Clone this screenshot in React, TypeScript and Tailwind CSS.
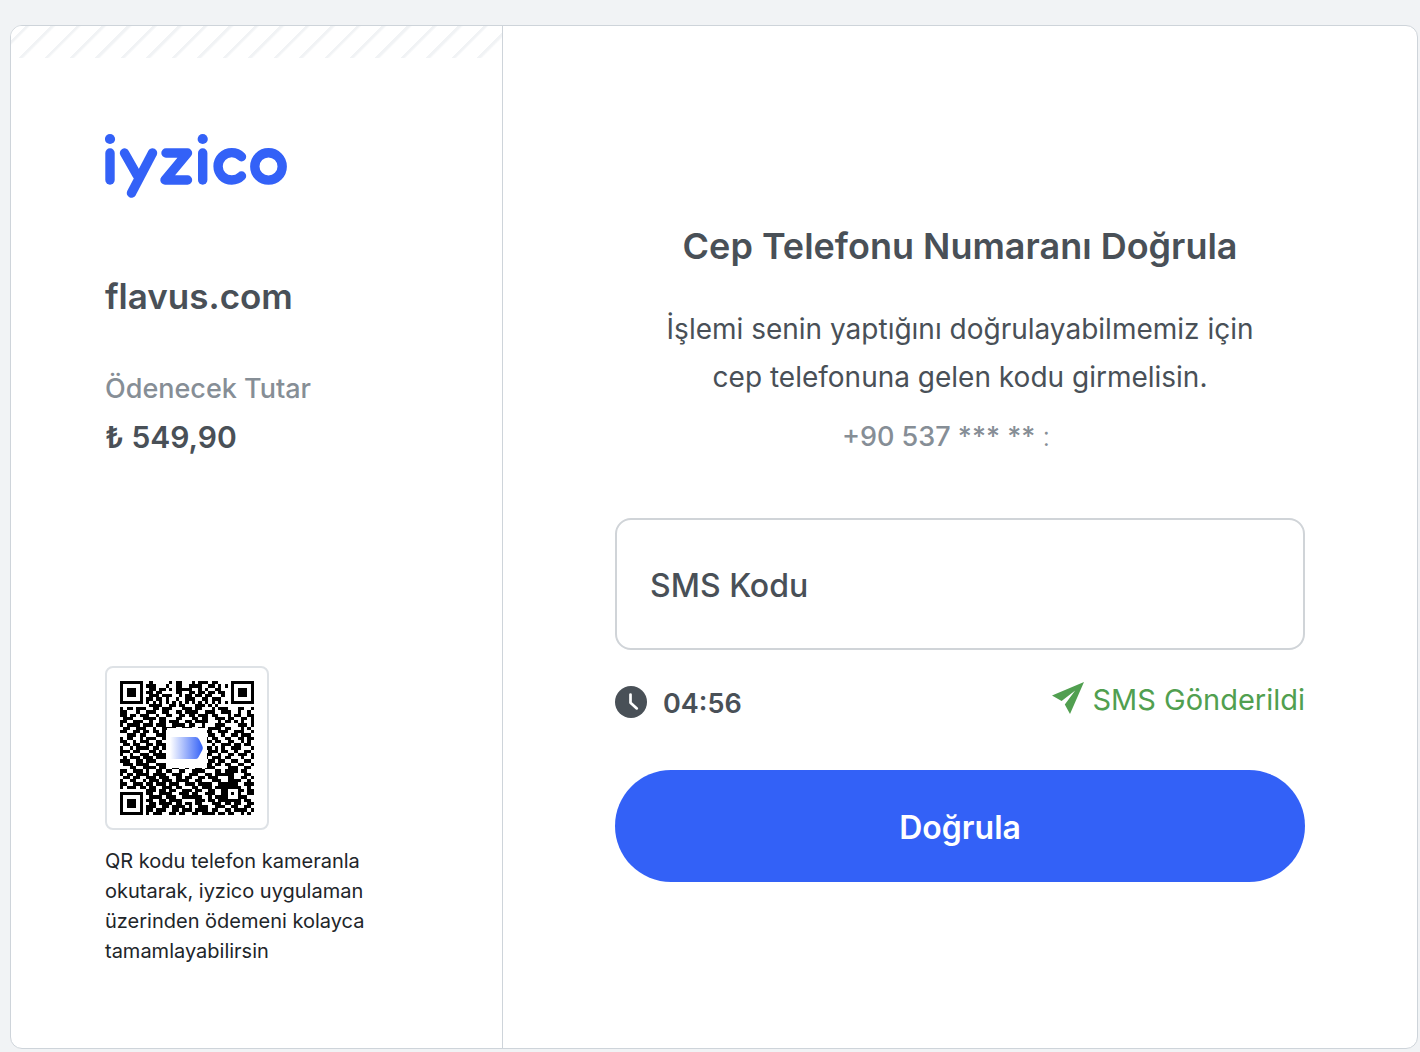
import { useState } from 'react';

const BLUE = '#3361f7';

const qrRows = [
  '11111110010000010110001011101100001111111',
  '10000010111000100110011110011010101000001',
  '10111010011011010111110010100110001011101',
  '10111010110110000110011011011011001011101',
  '10111010011101110010110110110001001011101',
  '10000010110110100100111001101110001000001',
  '11111110101010101010101010101010101111111',
  '00000000011110011011000111010100000000000',
  '10110111001101110001110110001011100011001',
  '11000100111001100110111100111001110010010',
  '11011011100100110011011011101100010110011',
  '01110001111011000110001101100111011001101',
  '11001110010011011100110111100010110101001',
  '10111101110111001111011001000111000011101',
  '01100111001001111001110011011110110001010',
  '11001101101101000000000000110011100111001',
  '00111011000111000000000000011001001101110',
  '10110010111001000000000000101100110011011',
  '11001011100110000000000000110110011001010',
  '01101100110111000000000000001001110110110',
  '10010111101101000000000000110101001110001',
  '11101100011010000000000000011101100100110',
  '10010011101111000000000000110010011011101',
  '01011101110111000000000000101110110001001',
  '11100110111000000000000000011011001100110',
  '01110111100111000000000000110110110011001',
  '00011001111011001100100110111000011100110',
  '11001110100110110011001111000110111101100',
  '10110111101111001110011100110111111000110',
  '01101100111011100110110011011100011001101',
  '10011001011101110111100110001110011110010',
  '11001110110111011100111011110011111100111',
  '10111011011001110110001101110111111110010',
  '00000000111011011001110110011001100011011',
  '11111110110011110011101100111001101010011',
  '10000010011110111001111110010111100011100',
  '10111010110011011110000111011011111110110',
  '10111010011011110110110110001110110110011',
  '10111010111001101111010011100111001100110',
  '10000010110111001101110111101100110111101',
  '11111110101110011011001101111011011001010',
];

const qrPath = qrRows
  .flatMap((row, y) => row.split('').map((cell, x) => (cell === '1' ? `M${x} ${y}h1v1h-1z` : '')))
  .join('');

function Logo() {
  return (
    <svg width="183" height="65" viewBox="0 0 183 65" role="img" aria-label="iyzico">
      <g fill="none" stroke={BLUE} strokeWidth="9.4" strokeLinecap="round" strokeLinejoin="round">
        <line x1="5" y1="20" x2="5" y2="47" />
        <line x1="19.5" y1="20" x2="32" y2="42" />
        <line x1="47.5" y1="20" x2="26.5" y2="60" />
        <polyline points="61,20 82.5,20 60,47 82.5,47" />
        <line x1="97.7" y1="20" x2="97.7" y2="47" />
        <path d="M136.5 23.7A13.7 13.7 0 1 0 136.5 43" />
        <circle cx="163.5" cy="33.4" r="13.7" />
      </g>
      <circle cx="5" cy="6" r="5.1" fill={BLUE} />
      <circle cx="97.7" cy="6" r="5.1" fill={BLUE} />
    </svg>
  );
}

function QrCode() {
  return (
    <svg width="134" height="134" viewBox="0 0 41 41" role="img" aria-label="QR" shapeRendering="crispEdges">
      <defs>
        <linearGradient id="tag" x1="0" x2="1" y1="0" y2="0">
          <stop offset="0" stopColor="#ffffff" />
          <stop offset="1" stopColor={BLUE} />
        </linearGradient>
      </defs>
      <path d={qrPath} fill="#000" />
      <rect x="14.3" y="14.3" width="12.2" height="12.4" fill="#fff" />
      <path
        d="M15.3 17.1h7.8q.7 0 1.1.7l1 2.1q.3.6 0 1.2l-1.2 2.2q-.3.6-1 .6h-7.7z"
        fill="url(#tag)"
        shapeRendering="auto"
      />
    </svg>
  );
}

function ClockIcon() {
  return (
    <svg width="32" height="32" viewBox="0 0 32 32" aria-hidden="true">
      <circle cx="16" cy="16" r="16" fill="#495057" />
      <path d="M15.5 8.5v8.2l6.3 5.7" fill="none" stroke="#fff" strokeWidth="2.7" strokeLinecap="round" strokeLinejoin="round" />
    </svg>
  );
}

function SendIcon() {
  return (
    <svg width="32" height="32" viewBox="0 0 32 32" aria-hidden="true">
      <path d="M32 0 0 13.5l9.6 5.6L23.2 8.4 12.8 22.4 18 32z" fill="#519f50" />
    </svg>
  );
}

export default function App() {
  const [code, setCode] = useState('');

  return (
    <div className="flex min-h-screen bg-[#f1f3f5] pt-[25px] pr-[2px] pb-[3px] pl-[10px] font-['Inter',sans-serif] text-[#495057]">
      <div className="flex flex-1 overflow-hidden rounded-xl border border-[#ced4da] bg-white">
        {/* Order summary */}
        <aside className="flex w-[35%] flex-col border-r border-[#ced4da]">
          <div className="h-8 bg-[repeating-linear-gradient(135deg,#fff_0px,#fff_10px,#f1f3f5_10px,#f1f3f5_12px,#fff_14px,#fff_18px)]" />
          <div className="flex flex-1 flex-col px-[94px] pt-[75px] pb-[82px]">
            <Logo />
            <h2 className="mt-[74px] text-[35px] leading-12 font-semibold">flavus.com</h2>
            <p className="mt-[45px] text-[27px] leading-12 font-medium text-[#868e96]">Ödenecek Tutar</p>
            <p className="text-[30px] leading-12 font-semibold">₺ 549,90</p>
            <div className="mt-auto w-fit rounded-lg border-2 border-[#dee2e6] p-[13px]">
              <QrCode />
            </div>
            <p className="mt-4 text-xl leading-[30px] whitespace-nowrap text-[#212529]">
              QR kodu telefon kameranla
              <br />
              okutarak, iyzico uygulaman
              <br />
              üzerinden ödemeni kolayca
              <br />
              tamamlayabilirsin
            </p>
          </div>
        </aside>

        {/* Verification form */}
        <main className="flex flex-1 flex-col items-center px-8 pt-[196px]">
          <form className="w-full max-w-[690px]" onSubmit={(e) => e.preventDefault()}>
            <h1 className="text-center text-4xl leading-12 font-semibold">Cep Telefonu Numaranı Doğrula</h1>
            <p className="mt-[35px] text-center text-[28px] leading-12">
              İşlemi senin yaptığını doğrulayabilmemiz için
              <br />
              cep telefonuna gelen kodu girmelisin.
            </p>
            <p className="mt-3 flex justify-center pr-7 text-[27px] leading-12 font-medium whitespace-pre text-[#868e96]">
              +90 537 *** ** <span className="font-light">:</span>
            </p>

            <div className="mt-[57px] flex h-[132px] items-center gap-4 rounded-2xl border-2 border-[#d0d4d8] px-[33px] pt-1">
              <label htmlFor="sms" className="text-[32px] leading-12 font-medium">
                SMS Kodu
              </label>
              <input
                id="sms"
                value={code}
                onChange={(e) => setCode(e.target.value)}
                inputMode="numeric"
                autoComplete="one-time-code"
                className="h-full min-w-0 flex-1 text-[32px] outline-none"
              />
            </div>

            <div className="mt-8 flex items-start justify-between">
              <div className="flex h-10 items-center gap-4 text-[27px] leading-10 font-semibold">
                <ClockIcon />
                <span className="pt-1">04:56</span>
              </div>
              <div className="flex h-8 items-center gap-2 text-[29px] leading-8 text-[#519f50]">
                <SendIcon />
                <span className="pt-1">SMS Gönderildi</span>
              </div>
            </div>

            <button type="submit" className="mt-12 h-28 w-full rounded-full bg-[#3361f7] pt-1 text-[32px] font-semibold text-white">
              Doğrula
            </button>
          </form>
        </main>
      </div>
    </div>
  );
}
